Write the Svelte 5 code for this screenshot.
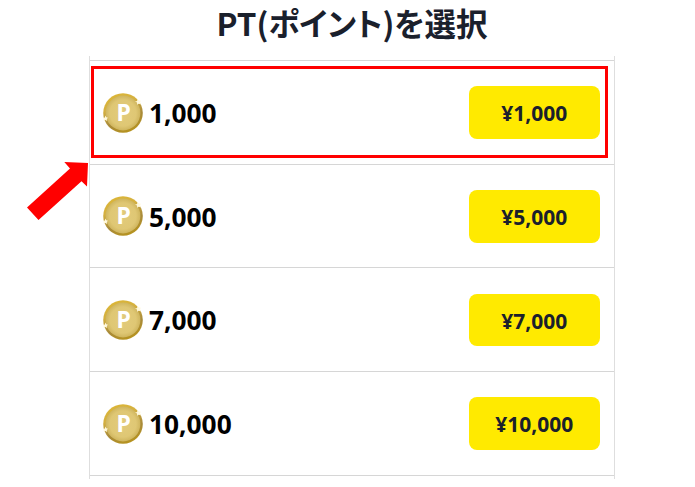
<script>
  const rows = [
    { points: '1,000', price: '¥1,000' },
    { points: '5,000', price: '¥5,000' },
    { points: '7,000', price: '¥7,000' },
    { points: '10,000', price: '¥10,000' }
  ];
</script>

<main>
  <h1>PT(ポイント)を選択</h1>

  <div class="list">
    {#each rows as row}
      <div class="row">
        <svg class="coin" viewBox="0 0 40 40" aria-hidden="true">
          <defs>
            <linearGradient id="rim" x1="0.3" y1="0" x2="0.7" y2="1">
              <stop offset="0" stop-color="#dcb636" />
              <stop offset="0.3" stop-color="#d4b040" />
              <stop offset="0.65" stop-color="#a88a3a" />
              <stop offset="1" stop-color="#b8941c" />
            </linearGradient>
            <radialGradient id="face">
              <stop offset="0" stop-color="#e2cb7b" />
              <stop offset="0.75" stop-color="#dfc774" />
              <stop offset="1" stop-color="#cfb55e" />
            </radialGradient>
          </defs>
          <circle cx="20" cy="20" r="19.8" fill="url(#rim)" />
          <circle cx="20" cy="20" r="17.4" fill="url(#face)" />
          <path d="M32 8l2 .2.500-2.200 1.500 1.600 1.900.2-.8 1.500.8 2-2.200-.5-1.500 1-.2-2z" fill="#fff8dc" />
          <path d="M.3 25.200l1.500-.6.5-2 1 1.700 1.700.4-1.200 1.200.3 2-1.700-.8-1.500.6z" fill="#fff8dc" />
          <text x="20.700" y="28.200" text-anchor="middle">P</text>
        </svg>
        <span class="points">{row.points}</span>
        <button>{row.price}</button>
      </div>
    {/each}

    <div class="frame"></div>
    <svg class="arrow" width="64" height="60" viewBox="0 0 64 60" aria-hidden="true">
      <path d="M37.300 2L61 3L60 26.500L54.500 21.300L11.500 60L0 47.500L43 8.500Z" fill="#f00" />
    </svg>
  </div>
</main>

<style>
  :global(body) {
    background: #fff;
  }
  main {
    width: 695px;
    height: 487px;
    overflow: hidden;
    font-family: 'Noto Sans', 'Noto Sans CJK JP', sans-serif;
  }
  h1 {
    margin: 0;
    padding-left: 9px;
    height: 56px;
    box-sizing: border-box;
    line-height: 45px;
    text-align: center;
    white-space: nowrap;
    font-family: 'Noto Sans CJK JP', sans-serif;
    font-size: 31.5px;
    font-weight: 700;
    font-feature-settings: 'palt';
    color: #1a202c;
  }
  .list {
    position: relative;
    box-sizing: border-box;
    width: 526px;
    height: 423px;
    margin-left: 89px;
    padding-top: 4px;
    border: solid #dedede;
    border-width: 0 1px;
  }
  .row {
    display: flex;
    align-items: center;
    box-sizing: border-box;
    height: 103.7px;
    padding: 0.8px 13px 0;
    border-top: 1px solid #d6d6d6;
  }
  .row:nth-child(4) {
    height: 104.7px;
    border-bottom: 1px solid #d6d6d6;
  }
  .coin {
    flex: none;
    width: 40px;
    height: 40px;
  }
  .coin text {
    font-family: 'Noto Sans', sans-serif;
    font-size: 23px;
    font-weight: 700;
    fill: #fff;
  }
  .points {
    flex: 1;
    margin-left: 6px;
    font-size: 26.3px;
    line-height: 36px;
    padding-top: 0.4px;
    font-weight: 700;
    color: #000;
  }
  button {
    box-sizing: border-box;
    width: 131.4px;
    height: 52.7px;
    margin-right: 0.6px;
    padding: 1px 1px 0 0;
    border: 0;
    border-radius: 8px;
    background: #ffea00;
    font: 700 21px/52px 'Noto Sans', sans-serif;
    color: #1a202c;
  }
  .frame {
    position: absolute;
    left: 1px;
    top: 10px;
    box-sizing: border-box;
    width: 517px;
    height: 92px;
    border: 3px solid #f00;
  }
  .arrow {
    position: absolute;
    left: -63px;
    top: 104px;
  }
</style>
